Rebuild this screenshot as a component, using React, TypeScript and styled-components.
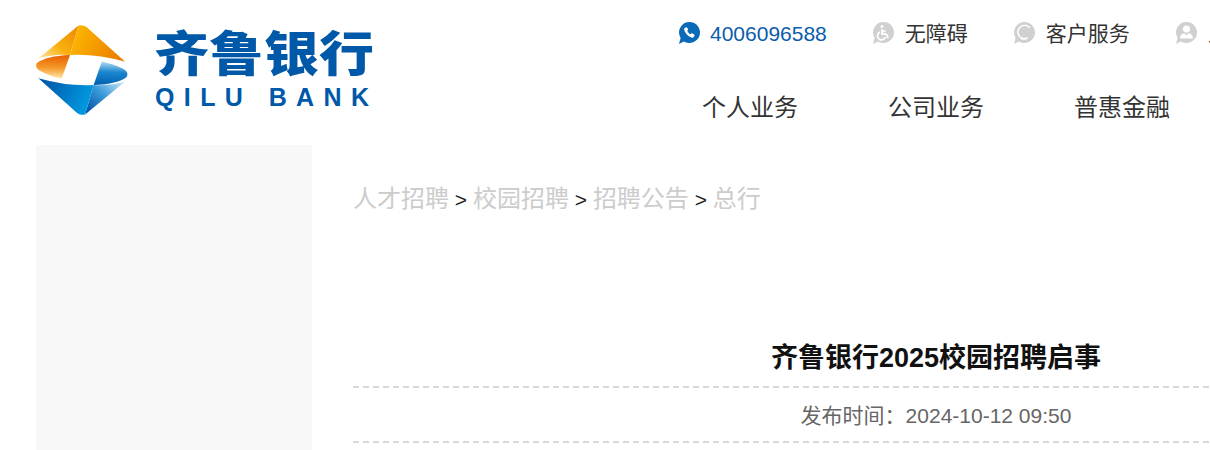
import React from 'react';
import styled, { createGlobalStyle } from 'styled-components';

const GlobalStyle = createGlobalStyle`
  html, body { margin: 0; padding: 0; background: #fff; overflow: hidden; }
  body { font-family: "Liberation Sans", "Noto Sans CJK SC", sans-serif; }
`;

const Page = styled.div`
  width: 1210px;
  height: 450px;
  overflow: hidden;
`;
const Header = styled.header`
  display: flex;
  height: 145px;
  padding-left: 36px;
`;
const Logo = styled.a`
  display: flex;
  flex: none;
  width: 643px;
  gap: 27px;
  padding-top: 25px;
`;
const LogoText = styled.div`
  display: flex;
  flex-direction: column;
  color: #0058a8;
`;
const LogoCn = styled.div`
  font-family: "Noto Sans CJK SC", sans-serif;
  font-weight: 900;
  font-size: 55px;
  line-height: 60px;
  margin-left: -1px;
  height: 60px;
  transform: scaleY(0.86);
  transform-origin: 0 0;
`;
const LogoEn = styled.div`
  font-family: "Liberation Sans", sans-serif;
  font-weight: 700;
  font-size: 25px;
  line-height: 24px;
  letter-spacing: 9.4px;
  white-space: nowrap;
`;
const HeaderRight = styled.div`
  flex: none;
  width: 620px;
`;
const TopBar = styled.div`
  display: flex;
  gap: 46px;
  height: 90px;
  padding-top: 22px;
  box-sizing: border-box;
  white-space: nowrap;
`;
const TopItem = styled.div<{ $blue?: boolean }>`
  display: flex;
  align-items: flex-start;
  gap: ${p => (p.$blue ? 10 : 11)}px;
  height: 24px;
  font-size: 21px;
  line-height: 24px;
  color: ${p => (p.$blue ? '#0b5cab' : '#333')};
`;
const MainNav = styled.nav`
  display: flex;
  gap: 90px;
  padding-left: 23px;
  white-space: nowrap;
`;
const NavItem = styled.a`
  font-size: 24px;
  line-height: 36px;
  color: #333;
`;
const Body = styled.div`
  display: flex;
  padding-left: 36px;
  gap: 41px;
`;
const Side = styled.aside`
  flex: none;
  width: 276px;
  height: 305px;
  background: #f8f8f8;
`;
const Content = styled.main`
  flex: none;
  width: 1166px;
`;
const Crumbs = styled.div`
  margin-top: 37px;
  line-height: 34px;
  color: #222;
  font-size: 21px;
`;
const CrumbLink = styled.a`
  font-size: 24px;
  color: #ccc;
`;
const Title = styled.h1`
  margin: 121px 0 0;
  font-size: 27px;
  line-height: 40px;
  font-weight: bold;
  text-align: center;
  color: #111;
`;
const Meta = styled.div`
  margin-top: 8px;
  height: 53px;
  box-sizing: content-box;
  border-top: 2px dashed #d8d8d8;
  border-bottom: 2px dashed #d8d8d8;
  text-align: center;
  font-size: 21px;
  line-height: 55px;
  color: #666;
`;

const BankMark = () => (
  <svg width="92" height="92" viewBox="0 0 92 92">
    <defs>
      <linearGradient id="oa" x1="0" y1="1" x2="1" y2="0.1">
        <stop offset="0" stopColor="#ffe7a6" />
        <stop offset="0.45" stopColor="#f9b10f" />
        <stop offset="1" stopColor="#ee8a00" />
      </linearGradient>
      <linearGradient id="ob" x1="0" y1="0.3" x2="1" y2="0.6">
        <stop offset="0" stopColor="#fdb900" />
        <stop offset="1" stopColor="#ea7d00" />
      </linearGradient>
      <linearGradient id="oc" x1="0.6" y1="0" x2="0.55" y2="1">
        <stop offset="0" stopColor="#e85f00" />
        <stop offset="0.55" stopColor="#f59a2b" />
        <stop offset="1" stopColor="#ffe9ac" />
      </linearGradient>
      <linearGradient id="ba" x1="0" y1="1" x2="1" y2="0.1">
        <stop offset="0" stopColor="#d5ecfa" />
        <stop offset="0.5" stopColor="#3a9ad9" />
        <stop offset="1" stopColor="#00509f" />
      </linearGradient>
      <linearGradient id="bb" x1="0" y1="0.3" x2="1" y2="0.6">
        <stop offset="0" stopColor="#00a0e6" />
        <stop offset="1" stopColor="#0058a8" />
      </linearGradient>
      <linearGradient id="bc" x1="0.6" y1="0" x2="0.55" y2="1">
        <stop offset="0" stopColor="#0061b0" />
        <stop offset="0.55" stopColor="#1b87cf" />
        <stop offset="1" stopColor="#b5dcf4" />
      </linearGradient>
    </defs>
    <g>
      <path d="M42.5 0.6 L2.4 33.4 Q17 29 34 30 Z" fill="url(#oa)" />
      <path d="M42.5 0.6 Q46.5 -0.8 50.5 2 L89.2 36.8 Q60 28.5 34 30 Z" fill="url(#ob)" />
      <path d="M34 30 Q10 31 1 38 Q-2 43 5.7 46.7 Q14 51 25.7 53.6 Z" fill="url(#oc)" />
    </g>
    <g transform="rotate(180 45.8 45)">
      <path d="M42.5 0.6 L2.4 33.4 Q17 29 34 30 Z" fill="url(#ba)" />
      <path d="M42.5 0.6 Q46.5 -0.8 50.5 2 L89.2 36.8 Q60 28.5 34 30 Z" fill="url(#bb)" />
      <path d="M34 30 Q10 31 1 38 Q-2 43 5.7 46.7 Q14 51 25.7 53.6 Z" fill="url(#bc)" />
    </g>
  </svg>
);

// all four top-bar icons are the same speech bubble with a different glyph
const Bubble = ({ color, children }: { color: string; children: React.ReactNode }) => (
  <svg width="21" height="23" viewBox="0 0 21 23" style={{ flex: 'none' }}>
    <path d="M10.5 0a10.5 10.5 0 1 1-5.6 19.4L0 22l1.6-6.1A10.5 10.5 0 0 1 10.5 0Z" fill={color} />
    {children}
  </svg>
);

const PhoneGlyph = () => (
  <path transform="translate(5 5) scale(0.72)" d="M3.6 0 6 3.4 4.5 5.2c.8 2.2 2.4 3.9 4.7 4.9l1.7-1.6L15 11l-1.5 3c-.4.7-1.2 1-2 .8C6 13.5 1.5 9 .2 3.5 0 2.7.3 1.9 1 1.5Z" fill="#fff" />
);

const WheelchairGlyph = () => (
  <g fill="none" stroke="#fff" strokeWidth="1.7">
    <circle cx="9" cy="4.6" r="1.5" fill="#fff" stroke="none" />
    <path d="M9 7v5.2h4.2l2 4" />
    <path d="M9 9.3h3.6" />
    <path d="M6.9 10a4.1 4.1 0 1 0 5.6 5" />
  </g>
);

const HeadsetGlyph = () => (
  <g fill="none" stroke="#fff">
    <circle cx="10.5" cy="10" r="6.6" strokeWidth="1.5" strokeDasharray="30 12" transform="rotate(60 10.5 10)" />
    <path d="M7 16.8h6" strokeWidth="1.5" />
  </g>
);

const PersonGlyph = () => (
  <g fill="#fff">
    <circle cx="10.5" cy="7" r="3.6" />
    <path d="M4 16.5c0-3.4 1.8-5 4.3-5.3l2.2 2 2.2-2c2.5.3 4.3 1.9 4.3 5.3Z" />
  </g>
);

export default function App(): JSX.Element {
  return (
    <Page>
      <GlobalStyle />
      <Header>
        <Logo>
          <BankMark />
          <LogoText>
            <LogoCn>齐鲁银行</LogoCn>
            <LogoEn>QILU BANK</LogoEn>
          </LogoText>
        </Logo>
        <HeaderRight>
          <TopBar>
            <TopItem $blue>
              <Bubble color="#0b6ab8"><PhoneGlyph /></Bubble>
              <span>4006096588</span>
            </TopItem>
            <TopItem>
              <Bubble color="#d0d0d0"><WheelchairGlyph /></Bubble>
              <span>无障碍</span>
            </TopItem>
            <TopItem>
              <Bubble color="#d0d0d0"><HeadsetGlyph /></Bubble>
              <span>客户服务</span>
            </TopItem>
            <TopItem>
              <Bubble color="#d0d0d0"><PersonGlyph /></Bubble>
              <span>人才招聘</span>
            </TopItem>
          </TopBar>
          <MainNav>
            <NavItem>个人业务</NavItem>
            <NavItem>公司业务</NavItem>
            <NavItem>普惠金融</NavItem>
          </MainNav>
        </HeaderRight>
      </Header>
      <Body>
        <Side />
        <Content>
          <Crumbs>
            <CrumbLink>人才招聘</CrumbLink> &gt; <CrumbLink>校园招聘</CrumbLink> &gt; <CrumbLink>招聘公告</CrumbLink> &gt; <CrumbLink>总行</CrumbLink>
          </Crumbs>
          <Title>齐鲁银行2025校园招聘启事</Title>
          <Meta>发布时间：2024-10-12 09:50</Meta>
        </Content>
      </Body>
    </Page>
  );
}
